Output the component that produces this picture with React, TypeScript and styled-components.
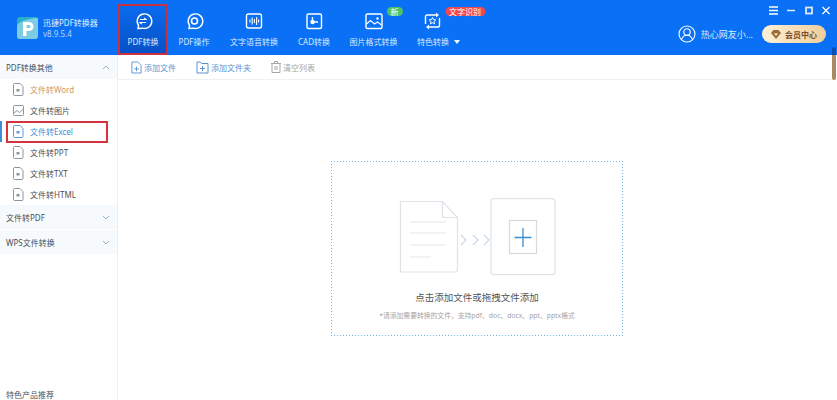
import React from 'react';
import styled, { createGlobalStyle } from 'styled-components';

const GlobalStyle = createGlobalStyle`
  html, body {
    margin: 0;
    padding: 0;
    width: 837px;
    height: 400px;
    overflow: hidden;
    background: #fff;
    font-family: "Noto Sans", "Noto Sans CJK SC", sans-serif;
  }
`;

const navItems = [
  { label: 'PDF转换', width: 50, icon: 'convert', active: true },
  { label: 'PDF操作', width: 52, icon: 'operate' },
  { label: '文字语音转换', width: 68, icon: 'voice' },
  { label: 'CAD转换', width: 52, icon: 'cad' },
  { label: '图片格式转换', width: 67, icon: 'image', badge: '新', badgeColor: '#4fc264' },
  { label: '特色转换', width: 63, icon: 'star', badge: '文字识别', badgeColor: '#f0484f', arrow: true },
];

const NavIcon = ({ name }: { name: string }) => {
  const common = { width: 20, height: 20, viewBox: '0 0 20 20', fill: 'none', stroke: '#fff', strokeWidth: 1.4 };
  if (name === 'convert')
    return (
      <svg {...common}>
        <path d="M5 17.5l.6-3A7.3 7.3 0 1 1 9.5 17.2z" />
        <path d="M7 8.5h6l-1.8-1.6M13 11.5H7l1.8 1.6" strokeWidth={1.1} />
      </svg>
    );
  if (name === 'operate')
    return (
      <svg {...common}>
        <path d="M5 17.5l.6-3A7.3 7.3 0 1 1 9.5 17.2z" />
        <circle cx="10.5" cy="10" r="3" strokeWidth={1.6} />
      </svg>
    );
  if (name === 'voice')
    return (
      <svg {...common}>
        <rect x="2.5" y="3" width="15" height="14" rx="2" />
        <path d="M6 8.5v3M8.2 6.5v7M10.4 8v4M12.6 6v8M14.6 8.5v3" strokeWidth={1.1} />
      </svg>
    );
  if (name === 'cad')
    return (
      <svg {...common}>
        <rect x="3" y="3" width="14.5" height="14.5" rx="1.5" />
        <path d="M8.5 6v6.5M8.5 11h5.5" />
        <circle cx="8.5" cy="11" r="1.5" fill="#fff" />
      </svg>
    );
  if (name === 'image')
    return (
      <svg {...common}>
        <rect x="2" y="3" width="16" height="14.5" rx="1.5" />
        <path d="M2.5 13l4-3.5 4 3.5 3-2 4 3" strokeWidth={1.2} />
        <circle cx="13.5" cy="7.5" r="1.2" fill="#fff" stroke="none" />
      </svg>
    );
  return (
    <svg {...common}>
      <path d="M15 4H4.500A1.500 1.500 0 0 0 3 5.500V13M5 16h10.500a1.500 1.500 0 0 0 1.500-1.500V7" />
      <path d="M13.500 2l2.500 2-2.500 2M6.500 14l-2.500 2 2.500 2" fill="#fff" strokeWidth={0.8} />
      <path d="M10 6.500l1 2.100 2.300.3-1.700 1.600.4 2.300-2-1.100-2 1.100.4-2.300-1.700-1.600 2.300-.3z" strokeWidth={1} />
    </svg>
  );
};

const FileIcon = ({ kind }: { kind?: string }) => {
  const tone = kind === 'active' ? '#5b9bdc' : '#8c959d';
  return (
    <svg width="11" height="13" viewBox="0 0 11 13" fill="none" stroke={tone} strokeWidth="1">
      {kind === 'image' ? (
        <>
          <rect x="0.5" y="1.500" width="10" height="10" rx="1" />
          <path d="M1 9l3-2.500 2.500 2 3.500-3" />
        </>
      ) : (
        <>
          <path d="M1.500.5h5.500l3 3v8a1 1 0 0 1-1 1h-7.500a1 1 0 0 1-1-1v-10a1 1 0 0 1 1-1z" />
          <rect x="3.500" y="6" width="3" height="2.500" fill={tone} stroke="none" />
        </>
      )}
    </svg>
  );
};

const Chevron = ({ up }: { up?: boolean }) => (
  <svg width="8" height="5" viewBox="0 0 8 5" fill="none" stroke="#8fb4cf" strokeWidth="1">
    <path d={up ? 'M1 4l3-3 3 3' : 'M1 1l3 3 3-3'} />
  </svg>
);

export default function App() {
  return (
    <>
      <GlobalStyle />
      <Page>
        <Header>
          <Brand>
            <Logo>
              <svg width="21" height="22" viewBox="0 0 21 22">
                <path d="M0 3a3 3 0 0 1 3-3h15a3 3 0 0 1 3 3v16a3 3 0 0 1-3 3H3a3 3 0 0 1-3-3z" fill="#2ab0c9" />
                <path d="M0 8c5-5 14-7 21-7v18a3 3 0 0 1-3 3H3a3 3 0 0 1-3-3z" fill="#7ecbe4" />
                <path d="M6 5h6a4.500 4.500 0 0 1 0 9H9.500v5H6zM9.500 8v3H12a1.500 1.500 0 0 0 0-3z" fill="#fff" />
              </svg>
            </Logo>
            <BrandText>
              <BrandName>迅捷PDF转换器</BrandName>
              <BrandVersion>v8.9.5.4</BrandVersion>
            </BrandText>
          </Brand>
          <Nav>
            {navItems.map((item) => (
              <NavItem key={item.label} $width={item.width} $active={item.active}>
                <NavIconWrap $shift={item.arrow ? -6.5 : 0}>
                  <NavIcon name={item.icon} />
                  {item.badge && <Badge $color={item.badgeColor!}>{item.badge}</Badge>}
                </NavIconWrap>
                <NavLabel>
                  {item.label}
                  {item.arrow && <Caret />}
                </NavLabel>
              </NavItem>
            ))}
          </Nav>
          <HeaderRight>
            <WindowControls>
              <svg width="9" height="9" viewBox="0 0 9 9" stroke="#fff" strokeWidth="1.300">
                <path d="M0 1h9M0 4.500h9M0 8h9" />
              </svg>
              <svg width="8" height="9" viewBox="0 0 8 9" stroke="#dce9fb" strokeWidth="1.500">
                <path d="M0 4.500h8" />
              </svg>
              <svg width="8" height="9" viewBox="0 0 8 9" fill="none" stroke="#dce9fb" strokeWidth="1.800">
                <rect x="1" y="1.500" width="6" height="6" />
              </svg>
              <svg width="8" height="9" viewBox="0 0 8 9" stroke="#fff" strokeWidth="1.200">
                <path d="M.5 1l7 7M7.500 1l-7 7" />
              </svg>
            </WindowControls>
            <UserRow>
              <svg width="18" height="18" viewBox="0 0 18 18" fill="none" stroke="#fff" strokeWidth="1.100">
                <circle cx="9" cy="9" r="8" />
                <circle cx="9" cy="7" r="3.200" />
                <path d="M3.500 14.500c1-3 3-4.300 5.500-4.300s4.500 1.300 5.500 4.300" />
              </svg>
              <UserName>热心网友小...</UserName>
              <MemberButton>
                <svg width="10" height="9" viewBox="0 0 10 9">
                  <path d="M2.500 0h5L10 3 5 9 0 3z" fill="#9a6b3a" />
                  <path d="M2.800 3.200h4.400L5 6z" fill="#f3dcb6" />
                </svg>
                会员中心
              </MemberButton>
            </UserRow>
          </HeaderRight>
        </Header>
        <Body>
          <Sidebar>
            <GroupHead>
              PDF转换其他
              <Chevron up />
            </GroupHead>
            <SideRow $color="#d39a5a">
              <FileIcon />
              文件转Word
            </SideRow>
            <SideRow>
              <FileIcon kind="image" />
              文件转图片
            </SideRow>
            <SideRow $color="#3d8fdc" $selected>
              <FileIcon kind="active" />
              文件转Excel
              <SelectMark />
            </SideRow>
            <SideRow>
              <FileIcon />
              文件转PPT
            </SideRow>
            <SideRow>
              <FileIcon />
              文件转TXT
            </SideRow>
            <SideRow>
              <FileIcon />
              文件转HTML
            </SideRow>
            <GroupHead>
              文件转PDF
              <Chevron />
            </GroupHead>
            <GroupHead $spaced>
              WPS文件转换
              <Chevron />
            </GroupHead>
            <SideFooter>特色产品推荐</SideFooter>
          </Sidebar>
          <Main>
            <Toolbar>
              <ToolButton $color="#5a93cf">
                <svg width="11" height="13" viewBox="0 0 12 14" fill="none" stroke="#5a93cf">
                  <path d="M1 1h6.500L11 4.500V13H1zM3.500 8.500h5M6 6v5" />
                </svg>
                添加文件
              </ToolButton>
              <ToolButton $color="#5a93cf">
                <svg width="13" height="13" viewBox="0 0 13 13" fill="none" stroke="#5a93cf">
                  <path d="M1 1h3.500l1 1.500H12V12H1zM4 7.500h5M6.500 5v5" />
                </svg>
                添加文件夹
              </ToolButton>
              <ToolButton $color="#a6a6a6">
                <svg width="10" height="12" viewBox="0 0 10 12" fill="none" stroke="#a6a6a6">
                  <path d="M1 2.500h8V11.500H1zM0 2.500h10M3.500 2.500V.5h3v2M4 5v4M6 5v4" />
                </svg>
                清空列表
              </ToolButton>
            </Toolbar>
            <Content>
              <DropZone>
                <Illustration>
                  <svg width="157" height="78" viewBox="0 0 157 78" fill="none">
                    <path d="M1.500 3.500h42l15 16v52.500a2 2 0 0 1-2 2h-55z" stroke="#dfe3e8" strokeWidth="1.200" />
                    <path d="M43.500 3.500v14a2 2 0 0 0 2 2h13" stroke="#dfe3e8" strokeWidth="1.200" />
                    <path d="M11 24h36M11 35h36M11 47h36M11 59h21" stroke="#e3e7eb" strokeWidth="1.200" />
                    <path d="M62 37l5 5-5 5M74 37l5 5-5 5M85 37l5 5-5 5" stroke="#c9d8e6" strokeWidth="1.200" />
                    <rect x="92" y="0.700" width="64" height="76" rx="3" stroke="#dfe3e8" strokeWidth="1.200" />
                    <rect x="110.500" y="22.500" width="27" height="33" stroke="#d5dade" strokeWidth="1.200" />
                    <path d="M124 30v19M115.500 39.500h17" stroke="#3a8fd0" strokeWidth="1.300" />
                  </svg>
                </Illustration>
                <DropTitle>点击添加文件或拖拽文件添加</DropTitle>
                <DropHint>*请添加需要转换的文件，支持pdf、doc、docx、ppt、pptx格式</DropHint>
              </DropZone>
            </Content>
          </Main>
          <ScrollBar />
        </Body>
      </Page>
    </>
  );
}

const Page = styled.div`
  position: relative;
  width: 837px;
  height: 400px;
  display: flex;
  flex-direction: column;
  overflow: hidden;
`;

const Header = styled.header`
  height: 55px;
  flex: none;
  display: flex;
  background: #0a70f5;
  color: #fff;
`;

const Brand = styled.div`
  width: 118px;
  flex: none;
  display: flex;
  align-items: center;
  gap: 5px;
  padding-left: 17px;
  box-sizing: border-box;
`;

const Logo = styled.div`
  display: flex;
`;

const BrandText = styled.div`
  display: flex;
  flex-direction: column;
  gap: 1px;
`;

const BrandName = styled.span`
  font-size: 8px;
  line-height: 11px;
  white-space: nowrap;
  color: #e4efff;
`;

const BrandVersion = styled.span`
  font-size: 8px;
  line-height: 10px;
  color: #b6d4fb;
`;

const Nav = styled.nav`
  display: flex;
  align-items: stretch;
`;

const NavItem = styled.div<{ $width: number; $active?: boolean }>`
  width: ${(p) => p.$width}px;
  flex: none;
  box-sizing: border-box;
  margin-top: 4px;
  display: flex;
  flex-direction: column;
  align-items: center;
  padding-top: 7px;
  ${(p) =>
    p.$active &&
    `
    background: linear-gradient(180deg, #0a6cf0 0%, #0750c4 100%);
    outline: 2px solid #c8313f;
    outline-offset: -2px;
  `}
`;

const NavIconWrap = styled.div<{ $shift: number }>`
  position: relative;
  display: flex;
  width: 20px;
  height: 20px;
  transform: translateX(${(p) => p.$shift}px);
`;

const Badge = styled.span<{ $color: string }>`
  position: absolute;
  left: 23px;
  top: -4px;
  height: 9px;
  padding: 0 4px;
  border-radius: 5px;
  background: ${(p) => p.$color};
  color: #fff;
  font-size: 8px;
  line-height: 9px;
  white-space: nowrap;
`;

const NavLabel = styled.span`
  margin-top: 5px;
  font-size: 8px;
  line-height: 12px;
  white-space: nowrap;
  color: #dce9ff;
  display: flex;
  align-items: center;
`;

const Caret = styled.i`
  margin-left: 5px;
  border: 3px solid transparent;
  border-top: 4px solid #fff;
  border-bottom: 0;
`;

const HeaderRight = styled.div`
  margin-left: auto;
  width: 162px;
  flex: none;
  box-sizing: border-box;
  padding-right: 11px;
  display: flex;
  flex-direction: column;
  align-items: flex-end;
`;

const WindowControls = styled.div`
  display: flex;
  gap: 9.500px;
  align-items: center;
  height: 20px;
  margin-right: -4px;
`;

const UserRow = styled.div`
  display: flex;
  align-items: center;
  margin-top: 5px;
`;

const UserName = styled.span`
  margin-left: 5px;
  font-size: 9px;
  color: #dbe9ff;
  white-space: nowrap;
`;

const MemberButton = styled.div`
  margin-left: 9px;
  width: 64px;
  height: 18px;
  border-radius: 9px;
  background: linear-gradient(90deg, #fdf0d8 0%, #efcf9c 100%);
  color: #7a4d20;
  font-size: 8px;
  font-weight: 700;
  display: flex;
  align-items: center;
  justify-content: center;
  gap: 4px;
  white-space: nowrap;
`;

const Body = styled.div`
  flex: 1;
  display: flex;
  min-height: 0;
`;

const Sidebar = styled.aside`
  width: 118px;
  flex: none;
  position: relative;
  box-sizing: border-box;
  border-right: 1px solid #eceff2;
  display: flex;
  flex-direction: column;
`;

const GroupHead = styled.div<{ $spaced?: boolean }>`
  height: 24px;
  margin-top: ${(p) => (p.$spaced ? '1px' : '0')};
  flex: none;
  box-sizing: border-box;
  padding: 0 7px 0 6px;
  background: #f6fafd;
  font-size: 8px;
  color: #4a4f55;
  display: flex;
  align-items: center;
  justify-content: space-between;
`;

const SideRow = styled.div<{ $color?: string; $selected?: boolean }>`
  position: relative;
  height: 21px;
  flex: none;
  box-sizing: border-box;
  padding-left: 13px;
  display: flex;
  align-items: center;
  gap: 6px;
  font-size: 8px;
  color: ${(p) => p.$color || '#4a4f55'};
  ${(p) => p.$selected && 'border-left: 2px solid #3d8fdc; padding-left: 11px;'}
`;

const SelectMark = styled.span`
  position: absolute;
  left: 4px;
  top: 0;
  width: 102px;
  height: 22px;
  box-sizing: border-box;
  border: 2px solid #d7323f;
`;

const SideFooter = styled.div`
  margin-top: auto;
  padding-left: 6px;
  height: 10px;
  font-size: 8px;
  line-height: 10px;
  color: #4a4f55;
`;

const Main = styled.main`
  flex: 1;
  min-width: 0;
  display: flex;
  flex-direction: column;
`;

const Toolbar = styled.div`
  height: 25px;
  flex: none;
  box-sizing: border-box;
  border-bottom: 1px solid #eef0f2;
  padding-left: 13px;
  display: flex;
  align-items: center;
  gap: 20px;
`;

const ToolButton = styled.div<{ $color: string }>`
  display: flex;
  align-items: center;
  gap: 2px;
  font-size: 8px;
  color: ${(p) => p.$color};
`;

const Content = styled.div`
  flex: 1;
  padding: 81px 0 0 213px;
`;

const DropZone = styled.div`
  width: 292px;
  height: 175px;
  box-sizing: border-box;
  padding-top: 37px;
  display: flex;
  flex-direction: column;
  align-items: center;
  background-image:
    repeating-linear-gradient(90deg, #6fb6e6 0 1px, transparent 1px 3px),
    repeating-linear-gradient(90deg, #6fb6e6 0 1px, transparent 1px 3px),
    repeating-linear-gradient(0deg, #6fb6e6 0 1px, transparent 1px 3px),
    repeating-linear-gradient(0deg, #6fb6e6 0 1px, transparent 1px 3px);
  background-size: 100% 1px, 100% 1px, 1px 100%, 1px 100%;
  background-position: 0 0, 0 100%, 0 0, 100% 0;
  background-repeat: no-repeat;
`;

const Illustration = styled.div`
  display: flex;
`;

const DropTitle = styled.div`
  margin-top: 15px;
  font-size: 9.500px;
  line-height: 14px;
  color: #555;
`;

const DropHint = styled.div`
  margin-top: 6px;
  font-size: 6.800px;
  line-height: 10px;
  color: #a5a5a5;
`;

const ScrollBar = styled.div`
  position: absolute;
  right: 1px;
  top: 47px;
  width: 4px;
  height: 33px;
  border-radius: 2px;
  background: linear-gradient(180deg, #0a4fae 0 8px, #a98a64 8px);
`;
